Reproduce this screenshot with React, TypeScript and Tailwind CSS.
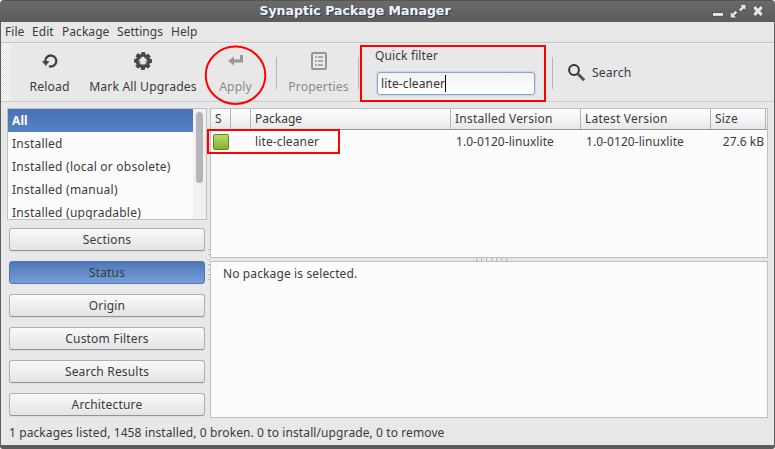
import React from 'react';

const filters = ['Installed', 'Installed (local or obsolete)', 'Installed (manual)', 'Installed (upgradable)'];
const views = ['Sections', 'Status', 'Origin', 'Custom Filters', 'Search Results', 'Architecture'];

function TitleBar() {
  return (
    <header className="relative flex h-[22px] shrink-0 items-start justify-center rounded-t-[4px] border-t border-[#555] bg-linear-to-b from-[#6a6a6a] to-[#5c5c5c]">
      <h1 className="pr-[65px] font-['DejaVu_Sans'] text-[12.5px] leading-[19px] font-bold tracking-[0.03px] text-[#f4f4f4] [text-shadow:1px_1px_0_#2e4368]">
        Synaptic Package Manager
      </h1>
      <svg className="absolute top-0 right-0" width="65" height="21" viewBox="710 1 65 21">
        <g stroke="#444" strokeWidth="0.8">
          <rect x="712.5" y="12.500" width="11" height="3.800" fill="#e4e4e4" />
          <path fill="#e2e2e2" d="M739 4.200h7v6.600l-2.200-2-3 3-2.300-2.300 2.900-2.900z M730.200 18v-6.800l2.200 2.100 3.100-3 2.300 2.300-3.100 3 2.400 2.400z" />
          <path fill="#e4e4e4" d="m755.200 5.500 2.800 2.600 2.800-2.600 2.500 2.400-2.500 3.100 2.500 3.100-2.500 2.400-2.800-2.600-2.800 2.600-2.500-2.400 2.500-3.100-2.500-3.100z" />
        </g>
      </svg>
    </header>
  );
}

function MenuBar() {
  return (
    <nav className="flex h-[21px] shrink-0 border-b border-[#c6c6c6] pl-1 leading-[20px] tracking-[0.05px]">
      <span className="w-[27px]">File</span>
      <span className="w-[30px]">Edit</span>
      <span className="w-[55px]">Package</span>
      <span className="w-[54px]">Settings</span>
      <span>Help</span>
    </nav>
  );
}

function ToolButton({ label, className, children }: { label: string; className: string; children: React.ReactNode }) {
  return (
    <div className={`flex shrink-0 flex-col items-center pt-[8px] ${className}`}>
      <svg width="20" height="20" viewBox="0 0 20 20" fill="none">{children}</svg>
      <span className="mt-[6px] text-[12.2px] leading-[18px] whitespace-nowrap">{label}</span>
    </div>
  );
}

function Separator() {
  return <div className="mt-[13px] h-8 w-px shrink-0 bg-[#b5b5b5]" />;
}

function Toolbar() {
  return (
    <div className="flex h-[59px] shrink-0 border-t border-b border-t-[#f1f1f1] border-b-[#cdcdcd]">
      <div className="ml-[1px] h-[57px] w-[9px] bg-[conic-gradient(#fff_25%,#dedede_0_50%,#fff_0_75%,#dedede_0)] bg-[length:2px_2px]" />
      <ToolButton label="Reload" className="ml-[14px] w-[49px]">
        <path d="M9 14.700A5.500 5.500 0 1 0 5.300 9.500" stroke="#3f3f3f" strokeWidth="2.300" transform="translate(0 -.5)" />
        <path d="m2 9 3.800 5L9.500 9z" fill="#484848" />
      </ToolButton>
      <ToolButton label="Mark All Upgrades" className="ml-[13px] w-[112px]">
        <circle cx="10" cy="9" r="7" stroke="#484848" strokeWidth="4" strokeDasharray="3.500 1.998" transform="rotate(-14.300 10 9)" />
        <circle cx="10" cy="9" r="5.800" fill="#e8e8e8" stroke="#454545" strokeWidth="3" />
        <path d="m10 3.800-5.500 5.400h2.400v3.600h6.200V9.200h2.400z" fill="#e8e8e8" stroke="#444" strokeWidth=".8" />
      </ToolButton>
      <ToolButton label="Apply" className="ml-[15px] w-[43px] text-[#8b8b8b]">
        <path d="M15.500 3v6H7" stroke="#989898" strokeWidth="3" />
        <path d="m2 9 6-4.500v9z" fill="#989898" />
      </ToolButton>
      <div className="ml-[19px]"><Separator /></div>
      <ToolButton label="Properties" className="ml-[10px] w-[63px] text-[#8b8b8b]">
        <rect x="3" y="1" width="14" height="16" rx="1" stroke="#969696" strokeWidth="2" />
        <path d="M6 5h2m1 0h5M6 9h2m1 0h5M6 13h2m1 0h5" stroke="#969696" strokeWidth="1.600" />
      </ToolButton>
      <div className="ml-[8px]"><Separator /></div>
      <div className="ml-[16px] w-[162px] shrink-0">
        <label className="block h-[28px] pt-[3px] leading-[17px]">Quick filter</label>
        <div className="ml-[2px] flex h-[23px] w-[158px] items-center rounded-[3px] border border-[#88a5d5] bg-linear-to-b from-[#f2f2f2] to-white pl-[3px] text-[#333] shadow-[0_0_0_1px_#cbd6e8]">
          <span className="w-[64px] whitespace-nowrap">lite-cleaner</span>
          <span className="h-[17px] w-px bg-black" />
        </div>
      </div>
      <div className="ml-[15px]"><Separator /></div>
      <div className="ml-[14px] flex h-[57px] items-center">
        <svg width="20" height="20" viewBox="0 0 20 20" fill="none">
          <circle cx="7" cy="7" r="4.900" stroke="#333" strokeWidth="2" />
          <path d="m10.700 10.700 6.500 6.500" stroke="#555" strokeWidth="3" />
        </svg>
        <span className="ml-[5px] pt-[2px] text-[12.2px]">Search</span>
      </div>
    </div>
  );
}

function Sidebar() {
  return (
    <aside className="flex w-[200px] shrink-0 flex-col">
      <div className="flex h-[112px] shrink-0 overflow-hidden border border-[#c0c0c0] bg-[#fcfcfc]">
        <ul className="min-w-0 flex-1 leading-[23px] whitespace-nowrap">
          <li className="h-[23px] bg-linear-to-b from-[#4a73b5] to-[#5480c5] pl-[4px] font-bold text-white">All</li>
          {filters.map((name) => <li key={name} className="h-[23px] pl-[4px] tracking-[0.23px]">{name}</li>)}
        </ul>
        <div className="w-[13px] bg-[#f0f0f0] pt-[3px] pl-[3px]">
          <div className="h-[71px] w-[7px] rounded-full bg-[#b5b5b5]" />
        </div>
      </div>
      <div className="flex flex-col gap-[10px] pt-[8px] pr-[2px] pl-[2px]">
        {views.map((name) => (
          <button
            key={name}
            className={`h-[23px] rounded-[3px] border text-center leading-[20px] tracking-[0.18px] ${name === 'Status'
              ? 'border-[#4f76b5] bg-linear-to-b from-[#5077b7] to-[#769edb]'
              : 'border-[#b0b0b0] border-b-[#949494] bg-linear-to-b from-[#f9f9f9] to-[#e4e4e4] shadow-[0_1px_1px_#dcdcdc]'}`}
          >
            {name}
          </button>
        ))}
      </div>
    </aside>
  );
}

function PackageTable() {
  return (
    <section className="h-[150px] border border-[#c0c0c0] bg-[#fcfcfc]">
      <div className="flex h-[21px] border-b border-[#999] bg-linear-to-b from-white via-[#f4f4f4] to-[#e7e7e7] leading-[19px] tracking-[0.22px] whitespace-nowrap [&>div]:border-r [&>div]:border-[#b4b4b4] [&>div]:pl-[4px]">
        <div className="w-[20px]">S</div>
        <div className="w-[20px]" />
        <div className="w-[200px] tracking-normal">Package</div>
        <div className="w-[130px]">Installed Version</div>
        <div className="w-[130px]">Latest Version</div>
        <div className="w-[55px]">Size</div>
      </div>
      <div className="flex h-[24px] items-center whitespace-nowrap">
        <div className="ml-[2px] h-[16px] w-[16px] rounded-[2px] border border-[#638521] bg-linear-to-b from-[#b8dc6c] to-[#86ad30]" />
        <span className="ml-[26px] w-[201px] tracking-[0.12px]">lite-cleaner</span>
        <span className="w-[130px] tracking-[0.06px]">1.0-0120-linuxlite</span>
        <span className="w-[130px] tracking-[0.06px]">1.0-0120-linuxlite</span>
        <span className="w-[48px] text-right tracking-normal">27.6 kB</span>
      </div>
    </section>
  );
}

const dots = [0, 1, 2, 3, 4, 5, 6];

export default function App() {
  return (
    <div className="relative flex h-[449px] w-[775px] flex-col overflow-hidden bg-white font-['Noto_Sans',sans-serif] text-[12px] tracking-[0.12px] text-[#3b3b3b]">
      <TitleBar />
      <div className="flex h-[427px] flex-col rounded-b-[3px] border-r border-b-[4px] border-l border-[#5c5c5c] bg-[#e8e8e8]">
        <MenuBar />
        <Toolbar />
        <main className="flex h-[317px] shrink-0 pt-[6px] pl-[6px]">
          <Sidebar />
          <div className="flex w-[3px] shrink-0 flex-col items-center pt-[140px]">
            {dots.map((d) => <i key={d} className="mb-[3px] h-[2px] w-[2px] border-t border-white bg-[#b5b5b5]" />)}
          </div>
          <div className="flex w-[558px] shrink-0 flex-col">
            <PackageTable />
            <div className="flex h-[3px] justify-center gap-[3px] pl-[4px]">
              {dots.map((d) => <i key={d} className="h-[3px] w-[2px] -skew-x-12 border-l border-white bg-[#aaa]" />)}
            </div>
            <section className="h-[157px] border border-[#c0c0c0] bg-[#fcfcfc] pt-[3px] pl-[12px] leading-[17px]">No package is selected.</section>
          </div>
        </main>
        <footer className="pt-[4px] pl-[8px] leading-[20px] tracking-[0.1px]">1 packages listed, 1458 installed, 0 broken. 0 to install/upgrade, 0 to remove</footer>
      </div>
      <svg className="pointer-events-none absolute inset-0" width="775" height="449" fill="none" stroke="red" strokeWidth="2">
        <ellipse cx="235.500" cy="75.300" rx="29.800" ry="28.700" />
        <path d="M361 46h184v55H361z M208 130h131v23H208z" />
      </svg>
    </div>
  );
}
